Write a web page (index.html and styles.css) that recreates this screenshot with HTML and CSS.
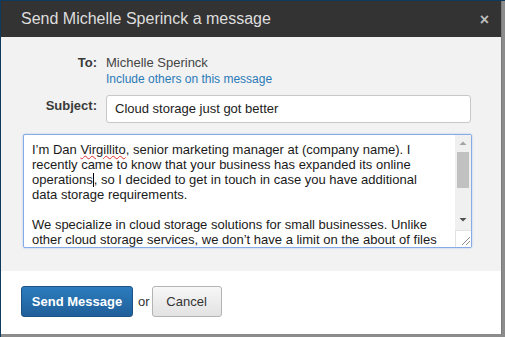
FILE: index.html
```html
<!DOCTYPE html>
<html>
<head>
<meta charset="utf-8">
<link rel="stylesheet" href="styles.css">
</head>
<body>
<div class="page">
  <div class="dialog">
    <div class="header">
      <span class="title">Send Michelle Sperinck a message</span>
      <span class="close">×</span>
    </div>
    <div class="body">
      <div class="row">
        <div class="label">To:</div>
        <div class="value">
          <div class="name">Michelle Sperinck</div>
          <a class="link">Include others on this message</a>
        </div>
      </div>
      <div class="row subject-row">
        <div class="label label-subject">Subject:</div>
        <div class="input">Cloud storage just got better</div>
      </div>
      <div class="textarea">
        <div class="text">
          <div class="line">I’m Dan <span class="spell">Virgillito</span>, senior marketing manager at (company name). I</div>
          <div class="line">recently came to know that your business has expanded its online</div>
          <div class="line">operations<span class="caret"></span>, so I decided to get in touch in case you have additional</div>
          <div class="line">data storage requirements.</div>
          <div class="line">&nbsp;</div>
          <div class="line">We specialize in cloud storage solutions for small businesses. Unlike</div>
          <div class="line">other cloud storage services, we don’t have a limit on the about of files</div>
        </div>
        <div class="scrollbar">
          <div class="sb-btn"><svg width="16" height="16" viewBox="0 0 16 16"><path d="M4.5 10 L8 6.5 L11.5 10 Z" fill="#a3a3a3"/></svg></div>
          <div class="sb-track"><div class="sb-thumb"></div></div>
          <div class="sb-btn"><svg width="16" height="16" viewBox="0 0 16 16"><path d="M4.5 6 L8 9.5 L11.5 6 Z" fill="#505050"/></svg></div>
          <div class="resizer"><svg width="16" height="16" viewBox="0 0 16 16"><path d="M14 6 L6 14 M14 10 L10 14" stroke="#8a8a8a" stroke-width="1"/></svg></div>
        </div>
      </div>
    </div>
    <div class="footer">
      <button class="btn btn-primary">Send Message</button>
      <span class="or">or</span>
      <button class="btn btn-cancel">Cancel</button>
    </div>
  </div>
</div>
</body>
</html>
```
FILE: styles.css
```css
html, body {
  margin: 0;
  padding: 0;
  background: #8c8c8c;
  width: 505px;
  height: 337px;
  overflow: hidden;
}
.page {
  border-top: 1px solid #0d3a5e;
  border-left: 1px solid #0d3a5e;
  width: 504px;
  height: 336px;
  font-family: "Liberation Sans", Arial, sans-serif;
}
.dialog {
  width: 500px;
  height: 333px;
  display: flex;
  flex-direction: column;
  background: #fff;
  box-shadow: 1px 0 0 #7a7a7a;
}
.header {
  height: 36px;
  background: #333333;
  display: flex;
  align-items: center;
  justify-content: space-between;
  padding: 0 12px 0 20px;
}
.title {
  color: #dedede;
  font-size: 16px;
  line-height: 36px;
}
.close {
  color: #bdbdbd;
  font-size: 16px;
  font-weight: bold;
  line-height: 36px;
  margin-top: 1px;
}
.body {
  background: #f2f2f2;
  height: 234px;
  box-sizing: border-box;
  padding: 18px 30px 0 22px;
}
.row {
  display: grid;
  grid-template-columns: 74px 1fr;
  column-gap: 9px;
  font-size: 13px;
  line-height: 16px;
}
.label {
  text-align: right;
  font-weight: bold;
  color: #3a3a3a;
}
.value .name {
  color: #454545;
}
.link {
  display: block;
  color: #2a7ab8;
  font-size: 12px;
  line-height: 16px;
}
.subject-row {
  margin-top: 8px;
}
.label-subject {
  padding-top: 3px;
}
.input {
  height: 28px;
  box-sizing: border-box;
  border: 1px solid #c8c8c8;
  border-radius: 3px;
  background: #fff;
  padding: 5px 8px;
  color: #222;
  font-size: 13px;
  line-height: 16px;
  width: 365px;
}
.textarea {
  margin-top: 11px;
  width: 449px;
  height: 114px;
  box-sizing: border-box;
  border: 1px solid #86abe6;
  border-radius: 2px;
  box-shadow: 0 0 2px rgba(120, 160, 230, 0.6);
  background: #fff;
  display: flex;
  overflow: hidden;
}
.text {
  flex: 1;
  padding: 7px 0 0 8px;
  font-size: 13px;
  line-height: 15px;
  color: #1a1a1a;
  overflow: hidden;
}
.line {
  white-space: nowrap;
}
.spell {
  text-decoration: underline wavy #e03030;
  text-decoration-thickness: 1px;
  text-underline-offset: 1px;
}
.caret {
  display: inline-block;
  width: 1px;
  height: 14px;
  background: #000;
  vertical-align: -3px;
}
.scrollbar {
  width: 16px;
  background: #f0f0f0;
  display: flex;
  flex-direction: column;
}
.sb-btn {
  height: 16px;
}
.sb-btn svg, .resizer svg {
  display: block;
}
.sb-track {
  flex: 1;
  padding-top: 1px;
}
.sb-thumb {
  margin: 0 2px;
  height: 36px;
  background: #c1c1c1;
}
.resizer {
  height: 16px;
  margin-top: 2px;
  background: #fff;
  border-top: 1px solid #e2e2e2;
  border-left: 1px solid #e2e2e2;
}
.footer {
  flex: 1;
  background: #fff;
  display: flex;
  align-items: center;
  padding: 0 0 2px 20px;
}
.btn {
  height: 31px;
  box-sizing: border-box;
  border-radius: 3px;
  font-family: "Liberation Sans", Arial, sans-serif;
  font-size: 13px;
  padding: 0;
  white-space: nowrap;
  text-align: center;
  cursor: pointer;
}
.btn-primary {
  width: 112px;
  color: #fff;
  font-weight: bold;
  background: linear-gradient(#2c7cbd, #1f5f9a);
  border: 1px solid #1c5285;
}
.or {
  color: #333;
  font-size: 13px;
  margin: 0 2px 0 5px;
}
.btn-cancel {
  width: 70px;
  color: #333;
  background: linear-gradient(#f7f7f7, #e2e2e2);
  border: 1px solid #b3b3b3;
}
```
